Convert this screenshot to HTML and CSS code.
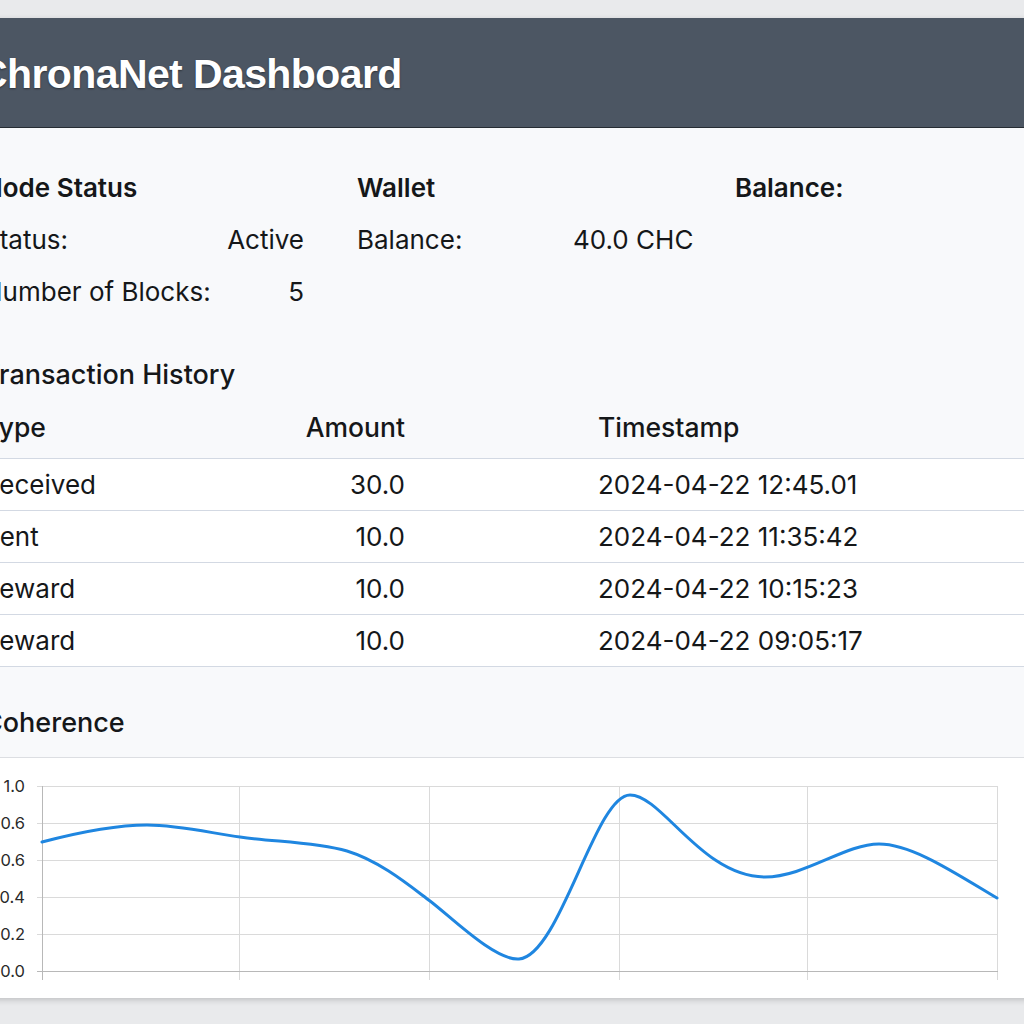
FILE: index.html
```html
<!DOCTYPE html>
<html lang="en">
<head>
<meta charset="utf-8">
<title>ChronaNet Dashboard</title>
<link rel="stylesheet" href="styles.css">
</head>
<body>
<div class="card">
  <header class="topbar"><h1 class="title">ChronaNet Dashboard</h1></header>

  <section class="stats">
    <div class="col col-node">
      <h2 class="heading">Node Status</h2>
      <div class="kv"><span>Status:</span><span>Active</span></div>
      <div class="kv"><span>Number of Blocks:</span><span>5</span></div>
    </div>
    <div class="col col-wallet">
      <h2 class="heading">Wallet</h2>
      <div class="kv2"><span class="k">Balance:</span><span>40.0 CHC</span></div>
    </div>
    <div class="col col-bal">
      <h2 class="heading">Balance:</h2>
    </div>
  </section>

  <section class="history">
    <h2 class="subheading">Transaction History</h2>
    <div class="table">
      <div class="tr th"><span>Type</span><span class="amt">Amount</span><span class="ts">Timestamp</span></div>
      <div class="tr"><span>Received</span><span class="amt">30.0</span><span class="ts">2024-04-22 12:45.01</span></div>
      <div class="tr"><span>Sent</span><span class="amt">10.0</span><span class="ts">2024-04-22 11:35:42</span></div>
      <div class="tr"><span>Reward</span><span class="amt">10.0</span><span class="ts">2024-04-22 10:15:23</span></div>
      <div class="tr"><span>Reward</span><span class="amt">10.0</span><span class="ts">2024-04-22 09:05:17</span></div>
    </div>
  </section>

  <section class="coherence">
    <h2 class="subheading">Coherence</h2>
  </section>
  <div class="chart">
    <svg class="chart-svg" width="1060" height="240" viewBox="0 0 1060 240">
      <g class="grid">
        <line x1="37" y1="28.5" x2="998" y2="28.5"/>
        <line x1="37" y1="65.5" x2="998" y2="65.5"/>
        <line x1="37" y1="102.5" x2="998" y2="102.5"/>
        <line x1="37" y1="139.5" x2="998" y2="139.5"/>
        <line x1="37" y1="176.5" x2="998" y2="176.5"/>
        <line x1="239.5" y1="28" x2="239.5" y2="222"/>
        <line x1="429.5" y1="28" x2="429.5" y2="222"/>
        <line x1="619.5" y1="28" x2="619.5" y2="222"/>
        <line x1="807.5" y1="28" x2="807.5" y2="222"/>
        <line x1="997.5" y1="28" x2="997.5" y2="222"/>
      </g>
      <line class="axis" x1="42.5" y1="28" x2="42.5" y2="222"/>
      <line class="axis" x1="37" y1="213.5" x2="998" y2="213.5"/>
      <g class="ylab">
        <text x="25" y="34">1.0</text>
        <text x="25" y="71">0.6</text>
        <text x="25" y="108">0.6</text>
        <text x="25" y="145">0.4</text>
        <text x="25" y="182">0.2</text>
        <text x="25" y="219">0.0</text>
      </g>
      <path class="curve" d="M42,84 C80,74 115,67 147,67 C180,67 215,76 240,79 C275,84 315,84 347,93 C380,103 410,128 430,143 C450,158 495,203 519,201 C560,198 595,37 630,37 C662,37 702,119 765,119 C805,119 845,86 879,86 C912,86 955,115 997,140"/>
    </svg>
  </div>
</div>
</body>
</html>
```

FILE: styles.css
```css
html, body {
  margin: 0;
  padding: 0;
  overflow: hidden;
}
body {
  background: #e9eaec;
  padding-top: 18px;
  font-family: Inter, "Noto Sans", sans-serif;
  color: #151719;
  height: 1024px;
  box-sizing: border-box;
}
.card {
  margin-left: -40px;
  width: 1100px;
  background: #f8f9fb;
  box-shadow: 0 2px 6px rgba(0, 0, 0, 0.18);
}
.topbar {
  height: 109px;
  background: #4c5663;
  border-bottom: 1px solid #262c33;
  display: flex;
  align-items: center;
  padding-left: 18px;
}
.title {
  margin: 0;
  padding-top: 4px;
  font-family: "Liberation Sans", Arial, sans-serif;
  font-weight: 700;
  font-size: 41px;
  color: #ffffff;
  text-shadow: 0 1px 2px rgba(0, 0, 0, 0.45);
  letter-spacing: -0.6px;
}
.stats {
  display: grid;
  grid-template-columns: 321px 325px auto;
  column-gap: 53px;
  padding: 34px 0 0 23px;
  white-space: nowrap;
}
.heading {
  margin: 0;
  font-size: 26px;
  font-weight: 600;
  line-height: 52px;
}
.kv {
  display: flex;
  justify-content: space-between;
  font-size: 26px;
  line-height: 52px;
}
.kv2 {
  display: flex;
  font-size: 26px;
  line-height: 52px;
}
.kv2 .k {
  width: 216px;
  flex-shrink: 0;
}
.history {
  padding-top: 31px;
}
.subheading {
  margin: 0;
  padding-left: 23px;
  font-size: 27px;
  font-weight: 500;
  line-height: 52px;
}
.table {
  font-size: 26px;
  white-space: nowrap;
}
.tr {
  display: grid;
  grid-template-columns: 303px 119px 1fr;
  padding-left: 23px;
  line-height: 51px;
  background: #ffffff;
  border-bottom: 1px solid #d3d9e3;
}
.tr.th {
  background: #f8f9fb;
  font-weight: 500;
  font-size: 26.5px;
  line-height: 52px;
  padding-bottom: 5px;
}
.amt {
  text-align: right;
}
.ts {
  padding-left: 193px;
}
.coherence {
  padding-top: 30px;
  padding-bottom: 8px;
  border-bottom: 1px solid #dcdee2;
}
.chart {
  background: #ffffff;
  padding-left: 40px;
  height: 240px;
}
.chart-svg {
  display: block;
}
.grid line {
  stroke: #dadada;
  stroke-width: 1;
}
.axis {
  stroke: #b8b8b8;
  stroke-width: 1;
}
.ylab text {
  font-family: Inter, "Noto Sans", sans-serif;
  font-size: 16.5px;
  fill: #2a2a2a;
  text-anchor: end;
}
.curve {
  fill: none;
  stroke: #1f86e0;
  stroke-width: 3;
  stroke-linecap: round;
}
```
